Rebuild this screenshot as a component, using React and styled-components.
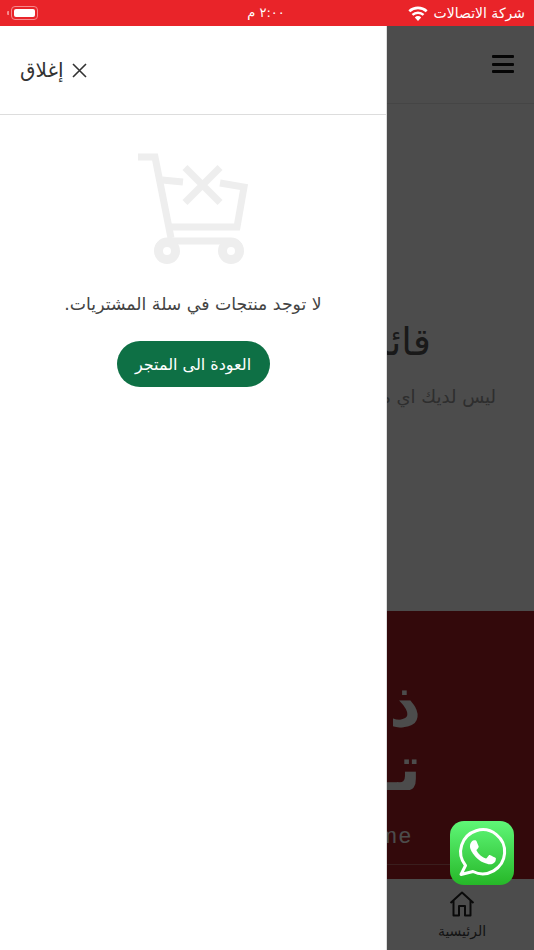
import styled, { createGlobalStyle } from 'styled-components';

const GlobalStyle = createGlobalStyle`
  html, body {
    margin: 0;
    padding: 0;
    background: #fff;
  }
  * {
    box-sizing: border-box;
  }
`;

const Screen = styled.div`
  width: 534px;
  height: 950px;
  display: flex;
  flex-direction: column;
  overflow: hidden;
  font-family: "DejaVu Sans", sans-serif;
`;

/* status bar */
const StatusBar = styled.div`
  height: 26px;
  flex: none;
  padding: 0 9px 0 7px;
  display: grid;
  grid-template-columns: 1fr auto 1fr;
  align-items: center;
  background: #e92429;
  color: #fff;
  font-size: 14px;
`;

const Battery = styled.div`
  width: 32px;
  height: 14px;
  display: flex;
  align-items: center;
  &::before {
    content: '';
    width: 2px;
    height: 4px;
    margin-right: 2px;
    background: #f58a8d;
    border-radius: 1px 0 0 1px;
  }
  span {
    width: 27px;
    height: 14px;
    flex: none;
    padding: 2px;
    border: 1px solid #f58a8d;
    border-radius: 4px;
    display: block;
  }
  span::before {
    content: '';
    display: block;
    height: 100%;
    background: #fff;
    border-radius: 2px;
  }
`;

const Clock = styled.div`
  direction: rtl;
  font-size: 13px;
  line-height: 26px;
`;

const Carrier = styled.div`
  direction: rtl;
  display: flex;
  align-items: center;
  gap: 6px;
  line-height: 26px;
`;

/* page under the drawer */
const Stage = styled.div`
  position: relative;
  flex: 1;
  display: flex;
  flex-direction: column;
  direction: rtl;
  background: #fff;
`;

const TopBar = styled.div`
  height: 78px;
  flex: none;
  padding: 29px 20px 0;
  display: flex;
  align-items: flex-start;
  border-bottom: 1px solid #e8e8e8;
`;

const Burger = styled.div`
  width: 22px;
  height: 18px;
  display: flex;
  flex-direction: column;
  justify-content: space-between;
  span {
    height: 3px;
    background: #111;
    border-radius: 1px;
  }
`;

const Wishlist = styled.div`
  flex: 1;
  display: flex;
  flex-direction: column;
  align-items: flex-start;
  padding-top: 214px;
`;

const WishTitle = styled.div`
  margin-right: 103px;
  font-size: 38px;
  line-height: 48px;
  white-space: nowrap;
  color: #555;
`;

const WishText = styled.div`
  margin: 20px 38px 0 0;
  font-size: 18px;
  white-space: nowrap;
  color: #999;
`;

const Hero = styled.div`
  height: 268px;
  flex: none;
  padding-top: 62px;
  background: #aa2125;
  color: #fff;
`;

const HeroLine = styled.div`
  margin-right: 113px;
  font-size: 62px;
  font-weight: 700;
  line-height: 64px;
  white-space: nowrap;
`;

const NameField = styled.div`
  margin: 24px 20px 0 0;
  height: 40px;
  padding-right: 101px;
  border-bottom: 1px solid rgba(255, 255, 255, 0.3);
  direction: ltr;
  text-align: right;
  font-family: "Liberation Sans", sans-serif;
  font-size: 22px;
  letter-spacing: 2px;
  line-height: 22px;
  color: #fff;
`;

const BottomNav = styled.div`
  height: 71px;
  flex: none;
  display: flex;
  background: #fff;
`;

const NavItem = styled.div`
  width: 144px;
  padding-top: 12px;
  display: flex;
  flex-direction: column;
  align-items: center;
  gap: 4px;
  font-size: 14px;
  line-height: 20px;
  color: #444;
`;

const Overlay = styled.div`
  position: absolute;
  inset: 0;
  background: rgba(0, 0, 0, 0.7);
`;

const WhatsApp = styled.div`
  position: absolute;
  left: 450px;
  top: 795px;
  width: 64px;
  height: 64px;
  border-radius: 14px;
  background: linear-gradient(#5ff777, #26b728);
`;

/* cart drawer */
const Drawer = styled.div`
  position: absolute;
  left: 0;
  top: 0;
  bottom: 0;
  width: 387px;
  display: flex;
  flex-direction: column;
  background: #fff;
  border-right: 1px solid #ddd;
`;

const DrawerHead = styled.div`
  height: 89px;
  flex: none;
  padding: 0 20px;
  display: flex;
  align-items: center;
  justify-content: flex-end;
  border-bottom: 1px solid #ddd;
`;

const CloseBtn = styled.div`
  display: flex;
  align-items: center;
  gap: 9px;
  font-size: 20px;
  color: #333;
  white-space: nowrap;
`;

const EmptyCart = styled.div`
  display: flex;
  flex-direction: column;
  align-items: center;
  padding-top: 35px;
`;

const EmptyText = styled.div`
  margin-top: 24px;
  font-size: 17.3px;
  line-height: 30px;
  color: #444;
  white-space: nowrap;
`;

const BackBtn = styled.div`
  margin-top: 22px;
  width: 153px;
  height: 46px;
  display: flex;
  align-items: center;
  justify-content: center;
  border-radius: 23px;
  background: #0e7045;
  color: #fff;
  font-size: 16px;
  white-space: nowrap;
`;

const CartIcon = () => (
  <svg width="115" height="115" viewBox="0 0 115 115" fill="none" stroke="#eee" strokeWidth="7">
    <path d="M2 7H19L35 88" />
    <path d="M26 30L47 32" />
    <path d="M32 77H101L108 37L84 33" />
    <path d="M49 17.5L84 52.5M84 17.5L49 52.5" />
    <path d="M22 101a9 9 0 0 1 9-10H95a9 9 0 0 1 9 10" />
    <circle cx="31" cy="101" r="8.5" strokeWidth="9" />
    <circle cx="95" cy="101" r="8.5" strokeWidth="9" />
  </svg>
);

const WhatsAppGlyph = () => (
  <svg width="64" height="64" viewBox="0 0 64 64">
    <path
      d="M15.5 44.5A22 22 0 1 1 23 50.5L11 53.5Z"
      fill="none"
      stroke="#fff"
      strokeWidth="3"
      strokeLinejoin="round"
    />
    <path
      transform="translate(7.2 1.8) scale(0.115)"
      fill="#fff"
      d="M325.1 300.5c-5.5-2.8-32.8-16.2-37.9-18-5.1-1.9-8.8-2.8-12.5 2.8-3.7 5.6-14.3 18-17.6 21.8-3.2 3.7-6.5 4.2-12 1.4-32.6-16.3-54-29.1-75.5-66-5.7-9.8 5.7-9.1 16.3-30.3 1.8-3.7.9-6.9-.5-9.7-1.4-2.8-12.5-30.1-17.1-41.2-4.5-10.8-9.1-9.3-12.5-9.5-3.2-.2-6.9-.2-10.6-.2-3.7 0-9.7 1.4-14.8 6.9-5.1 5.6-19.4 19-19.4 46.3 0 27.3 19.9 53.7 22.6 57.4 2.8 3.7 39.1 59.7 94.8 83.8 35.2 15.2 49 16.5 66.6 13.9 10.7-1.6 32.8-13.4 37.4-26.4 4.6-13 4.6-24.1 3.2-26.4-1.3-2.5-5-3.9-10.5-6.6z"
    />
  </svg>
);

const App = () => (
  <Screen>
    <GlobalStyle />
    <StatusBar>
      <Battery><span /></Battery>
      <Clock>٢:٠٠ م</Clock>
      <Carrier>
        <span>شركة الاتصالات</span>
        <svg width="20" height="16" viewBox="0 0 20 16" fill="#fff">
          <path d="M10 16l-3.2-3.6a4.6 4.6 0 0 1 6.4 0z" />
          <path d="M5.3 10.8L3.6 8.9a9.4 9.4 0 0 1 12.8 0l-1.7 1.9a6.9 6.9 0 0 0-9.4 0z" />
          <path d="M2.2 7.3L.4 5.3a14.2 14.2 0 0 1 19.2 0l-1.8 2a11.6 11.6 0 0 0-15.6 0z" />
        </svg>
      </Carrier>
    </StatusBar>
    <Stage>
      <TopBar>
        <Burger><span /><span /><span /></Burger>
      </TopBar>
      <Wishlist>
        <WishTitle>قائمة الرغبات</WishTitle>
        <WishText>ليس لديك اي منتجات في قائمة الرغبات</WishText>
      </Wishlist>
      <Hero>
        <HeroLine>ذوقك</HeroLine>
        <HeroLine>تـسوق</HeroLine>
        <NameField>Your name</NameField>
      </Hero>
      <BottomNav>
        <NavItem>
          <svg width="26" height="26" viewBox="0 0 26 26" fill="none" stroke="#222" strokeWidth="2" strokeLinejoin="round">
            <path d="M1.5 12L13 1.5L24.5 12M4.5 9.5V24.5H10V15H16V24.5H21.5V9.5" />
          </svg>
          <span>الرئيسية</span>
        </NavItem>
      </BottomNav>
      <Overlay />
      <WhatsApp><WhatsAppGlyph /></WhatsApp>
      <Drawer>
        <DrawerHead>
          <CloseBtn>
            <svg width="15" height="15" viewBox="0 0 15 15" stroke="#333" strokeWidth="1.6">
              <path d="M1 1L14 14M14 1L1 14" />
            </svg>
            <span>إغلاق</span>
          </CloseBtn>
        </DrawerHead>
        <EmptyCart>
          <CartIcon />
          <EmptyText>لا توجد منتجات في سلة المشتريات.</EmptyText>
          <BackBtn>العودة الى المتجر</BackBtn>
        </EmptyCart>
      </Drawer>
    </Stage>
  </Screen>
);

export default App;
